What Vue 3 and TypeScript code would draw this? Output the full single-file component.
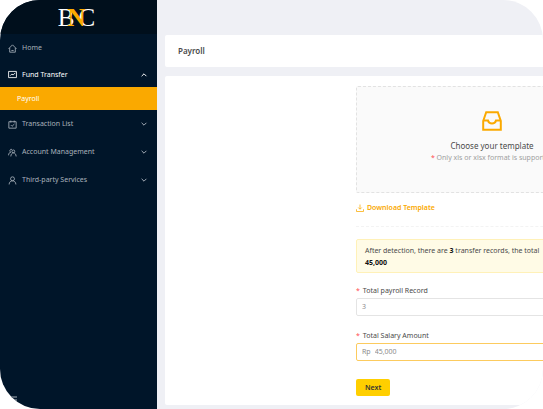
<script setup lang="ts">
import { ref } from 'vue'

interface MenuItem {
  label: string
  icon: string[]
  open?: boolean
  children?: string[]
}

const menu: MenuItem[] = [
  { label: 'Home', icon: ['M1 8.5 8 1.5l7 7', 'M3 7v7.5h10V7', 'M6 11.5h4'] },
  {
    label: 'Fund Transfer',
    icon: ['M1 2.5h14v11H1z', 'M4 10l3-3 2 2 4-4'],
    open: true,
    children: ['Payroll'],
  },
  {
    label: 'Transaction List',
    icon: ['M1.5 3h13v11.5h-13z', 'M5 1v3.5M11 1v3.5', 'M5 9l2.2 2.2L11.5 7'],
    open: false,
  },
  {
    label: 'Account Management',
    icon: ['M7 2.5a2.5 2.5 0 1 0-2 5', 'M1 13c0-3.5 1.5-5 4-5.5', 'M9.5 3.5a2.5 2.5 0 1 0 0 5 2.5 2.5 0 0 0 0-5z', 'M5 15c.5-8.5 9-8.5 9.5 0'],
    open: false,
  },
  {
    label: 'Third-party Services',
    icon: ['M8 1.5a3.5 3.5 0 1 0 0 7 3.5 3.5 0 0 0 0-7z', 'M2 15c0-8.5 12-8.5 12 0'],
    open: false,
  },
]

const records = ref('3')
const amount = ref('45,000')
</script>

<template>
  <div class="shell">
    <aside class="sidebar">
      <div class="logo"><span>B</span><span class="accent">N</span><span>C</span></div>
      <nav>
        <div v-for="item in menu" :key="item.label" class="group">
          <button type="button" class="item" :class="{ active: item.open }">
            <svg class="icon" viewBox="0 0 16 16"><path v-for="d in item.icon" :key="d" :d="d" /></svg>
            <span class="label">{{ item.label }}</span>
            <svg v-if="item.open !== undefined" class="chevron" :class="{ up: item.open }" viewBox="0 0 10 10">
              <path d="M2 3.5 5 6.500 8 3.5" />
            </svg>
          </button>
          <a v-for="child in item.children" :key="child" href="#" class="sub">{{ child }}</a>
        </div>
      </nav>
      <button type="button" class="collapse" aria-label="Menu">
        <svg viewBox="0 0 10 8"><path d="M0 1h10M0 4h10M0 7h10" /></svg>
      </button>
    </aside>

    <main class="main">
      <header class="title"><h1>Payroll</h1></header>
      <section class="panel">
        <form class="form" @submit.prevent>
          <button type="button" class="upload">
            <svg class="inbox" viewBox="0 0 20 20">
              <path d="M1.2 10 4.2 1.2h11.6L18.8 10v8.8H1.2z" />
              <path d="M1.2 9.5H6c.5 2 2 3 4 3s3.5-1 4-3h4.8" />
            </svg>
            <span class="upload-title">Choose your template</span>
            <span class="hint"><i>*</i> Only xls or xlsx format is supported</span>
          </button>
          <a href="#" class="download">
            <svg viewBox="0 0 16 16"><path d="M8 1v9M4.500 7 8 10.500 11.500 7M1 10.500V15h14v-4.500" /></svg>
            Download Template
          </a>
          <hr />
          <p class="alert">After detection, there are <b>3</b> transfer records, the total<br /><b>45,000</b></p>
          <div class="field">
            <label for="records"><i>*</i>Total payroll Record</label>
            <div class="box"><input id="records" v-model="records" type="text" /></div>
          </div>
          <div class="field">
            <label for="amount"><i>*</i>Total Salary Amount</label>
            <div class="box focus"><span>Rp</span><input id="amount" v-model="amount" type="text" /></div>
          </div>
          <button type="submit" class="next">Next</button>
        </form>
      </section>
    </main>
  </div>
</template>

<style>
body {
  background: #fff;
}
</style>

<style scoped>
* {
  box-sizing: border-box;
}
.shell {
  display: flex;
  min-height: 100vh;
  overflow: hidden;
  border-radius: 40px;
  background: #eff0f5;
  color: #4a4a4a;
  font: 7px/12px 'Noto Sans', sans-serif;
}
button,
input {
  margin: 0;
  padding: 0;
  border: 0;
  background: none;
  color: inherit;
  font: inherit;
}
a {
  text-decoration: none;
}
svg {
  fill: none;
  stroke: currentColor;
}
.sidebar {
  display: flex;
  flex: 0 0 157px;
  flex-direction: column;
  background: #001529;
  color: #a9b2bb;
}
.logo {
  display: flex;
  justify-content: center;
  height: 34px;
  padding-right: 4px;
  background: #000f1c;
  color: #fff;
  font: 25px/35px 'Liberation Serif', serif;
}
.logo .accent {
  z-index: 1;
  margin: 0 -7px;
  color: #faa900;
  font-weight: 700;
}
.item {
  display: flex;
  align-items: center;
  width: 100%;
  height: 28px;
  padding: 0 9px 0 8px;
  text-align: left;
}
.item.active {
  height: 25px;
  color: #fff;
}
.icon {
  width: 9px;
  height: 9px;
  margin-right: 5px;
  stroke-width: 1.5;
}
.label {
  flex: 1;
}
.chevron {
  width: 8px;
  height: 8px;
  stroke-width: 1.2;
}
.chevron.up {
  transform: rotate(180deg);
}
.sub {
  display: block;
  padding-left: 17px;
  background: #faa900;
  color: #fff;
  line-height: 23px;
}
.collapse {
  margin-top: auto;
  padding: 0 0 5px 7px;
  text-align: left;
}
.collapse svg {
  display: block;
  width: 10px;
  height: 8px;
}
.main {
  display: flex;
  flex: 1;
  flex-direction: column;
  gap: 9px;
  min-width: 0;
  padding: 35px 0 4px 8px;
}
.title,
.panel {
  border-radius: 2px 0 0 2px;
  background: #fff;
}
.title {
  padding: 10px 13px;
}
.title h1 {
  margin: 0;
  font-size: 8px;
  font-weight: 600;
  line-height: 12px;
}
.panel {
  flex: 1;
  padding: 10px 0 9px 191px;
}
.form {
  width: 272px;
}
.upload {
  display: flex;
  flex-direction: column;
  align-items: center;
  justify-content: flex-start;
  width: 100%;
  height: 107px;
  padding: 24px 0;
  border: 1px dashed #e2e2e2;
  border-radius: 2px;
  background: #fafafa;
}
.inbox {
  width: 20px;
  height: 20px;
  margin-bottom: 9px;
  color: #faa900;
  stroke-width: 2;
}
.upload-title {
  font-size: 8px;
}
.hint {
  color: #a0a0a0;
}
i {
  color: #ff4d4f;
  font-style: normal;
}
.download {
  display: flex;
  align-items: center;
  gap: 3px;
  margin-top: 9px;
  color: #faa900;
  font-weight: 600;
}
.download svg {
  width: 8px;
  height: 8px;
  stroke-width: 1.5;
}
hr {
  margin: 12px 0;
  border: 0;
  border-top: 1px dashed #f3f3f3;
}
.alert {
  margin: 0 0 12px;
  padding: 5px 8px 3px;
  border: 1px solid #fff1b8;
  border-radius: 2px;
  background: #fffbe6;
  white-space: nowrap;
}
.alert b {
  color: #111;
}
.field {
  margin-bottom: 14px;
}
.field label {
  display: block;
  margin-bottom: 1px;
}
.field i {
  margin-right: 3px;
}
.box {
  display: flex;
  align-items: center;
  gap: 4px;
  height: 18px;
  padding: 0 5px;
  border: 1px solid #e4e4e4;
  border-radius: 2px;
  color: #8c8c8c;
}
.box.focus {
  border-color: #fccb5e;
}
.box input {
  flex: 1;
  min-width: 0;
  outline: none;
}
.next {
  display: block;
  height: 17px;
  margin-top: 18px;
  padding: 0 9px;
  border-radius: 2px;
  background: #ffcf00;
  color: #333;
  font-weight: 600;
}
</style>
